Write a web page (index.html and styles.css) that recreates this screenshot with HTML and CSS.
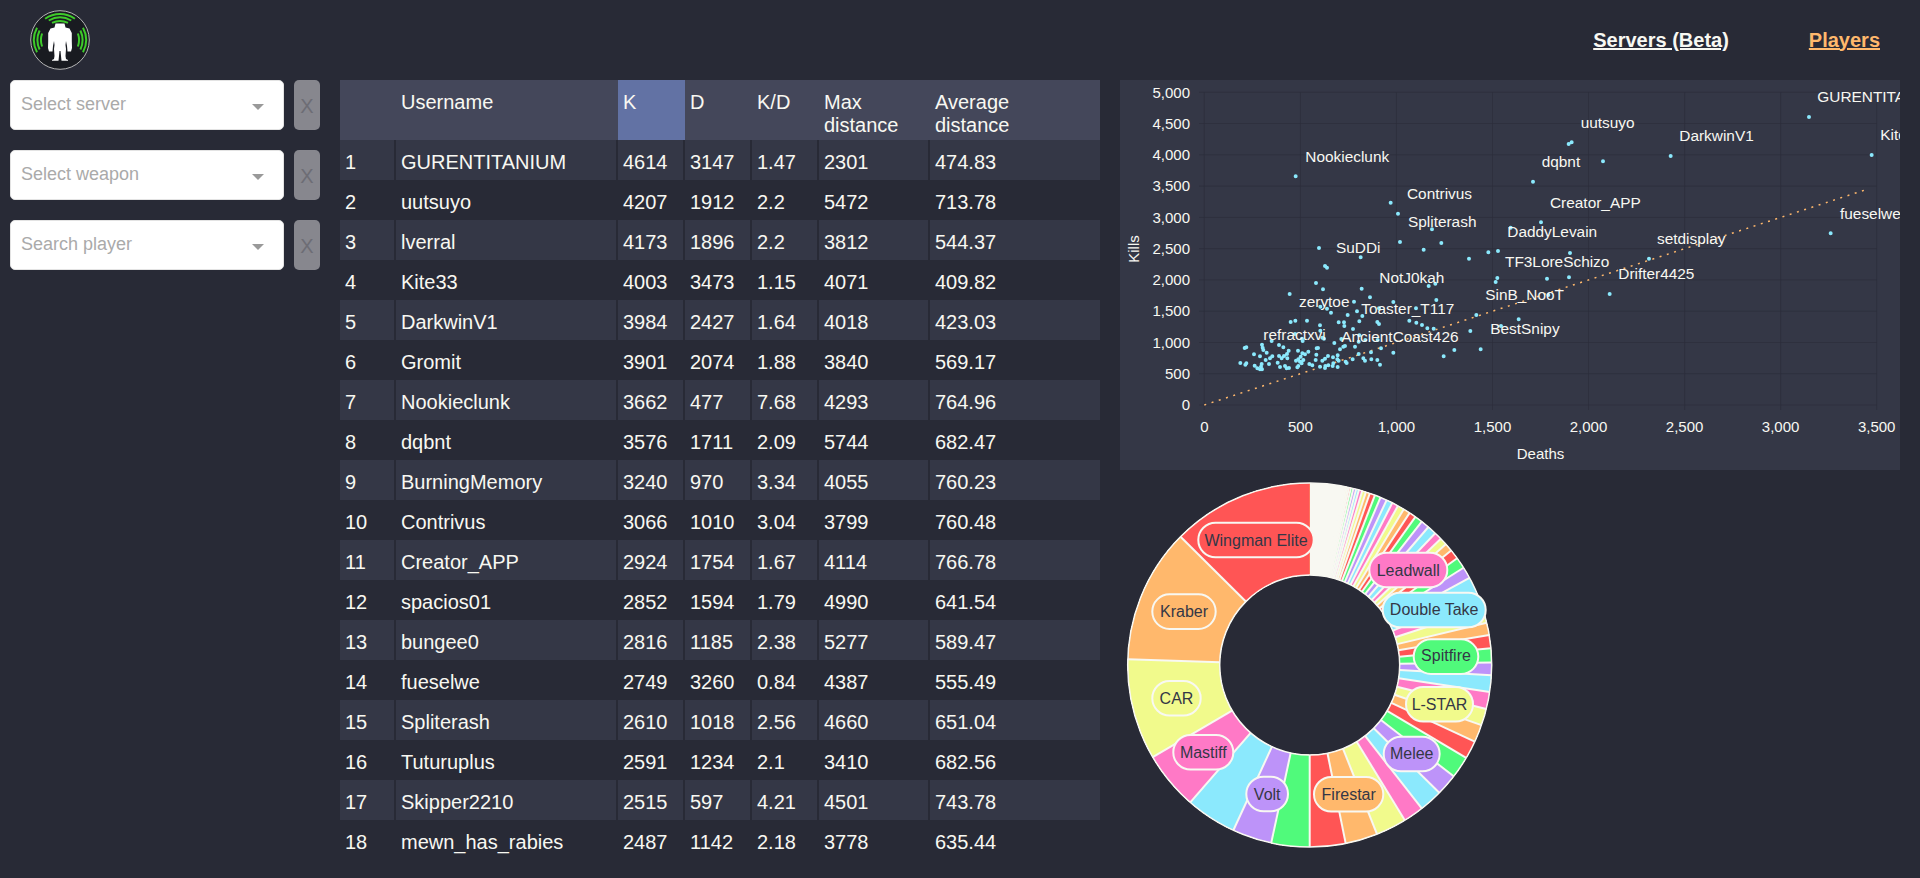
FILE: index.html
```html
<!DOCTYPE html>
<html lang="en">
<head>
<meta charset="utf-8">
<title>Players</title>
<link rel="stylesheet" href="styles.css">
</head>
<body>
<header class="topbar">
  <svg class="logo" viewBox="0 0 60 60" width="60" height="60">
    <circle cx="30" cy="30" r="29.3" class="logo-disc"/>
    <path class="logo-arc" d="M15.1 8.700A26 26 0 0 1 44.900 8.700M18.750 10.500A22.500 22.500 0 0 1 41.250 10.500M22 12.800A19 19 0 0 1 38 12.800M53 17.800A26 26 0 0 1 53 42.200M50.400 20.500A22.500 22.500 0 0 1 50.400 39.500M47.900 23.500A19 19 0 0 1 47.900 36.500M7 17.800A26 26 0 0 0 7 42.200M9.600 20.500A22.500 22.500 0 0 0 9.600 39.500M12.100 23.500A19 19 0 0 0 12.100 36.500"/>
    <path class="logo-titan" d="M25.500 13.500H34.500L35.500 17.500L39.500 18.500L41.800 23L41.800 31L42 38L41 41.500L37.500 41.500L37 36L36 31L35.500 35L36 39L35.500 46L36 49L38 50V50.700H31.500L31 46L30.500 41H29.500L29 46L28.500 50.700H22V50L24 49L24.500 46L24 39L24.500 35L24 31L23 36L22.500 41.500L19 41.500L18 38L18.200 31L18.200 23L20.500 18.500L24.500 17.500Z"/>
  </svg>
  <nav class="nav">
    <a class="nav-link" href="#">Servers (Beta)</a>
    <a class="nav-link nav-active" href="#">Players</a>
  </nav>
</header>
<main class="layout">
  <aside class="filters">
    <div class="filter"><div class="select"><span class="placeholder">Select server</span><i class="caret"></i></div><button class="clear" disabled>X</button></div>
    <div class="filter"><div class="select"><span class="placeholder">Select weapon</span><i class="caret"></i></div><button class="clear" disabled>X</button></div>
    <div class="filter"><div class="select"><span class="placeholder">Search player</span><i class="caret"></i></div><button class="clear" disabled>X</button></div>
  </aside>
  <table class="board">
    <colgroup><col class="c-rank"><col class="c-name"><col class="c-num"><col class="c-num"><col class="c-num"><col class="c-max"><col class="c-avg"></colgroup>
    <thead><tr><th></th><th>Username</th><th class="sorted">K</th><th>D</th><th>K/D</th><th>Max distance</th><th class="th-avg">Average distance</th></tr></thead>
    <tbody>
      <tr><td>1</td><td>GURENTITANIUM</td><td>4614</td><td>3147</td><td>1.47</td><td>2301</td><td>474.83</td></tr>
      <tr><td>2</td><td>uutsuyo</td><td>4207</td><td>1912</td><td>2.2</td><td>5472</td><td>713.78</td></tr>
      <tr><td>3</td><td>lverral</td><td>4173</td><td>1896</td><td>2.2</td><td>3812</td><td>544.37</td></tr>
      <tr><td>4</td><td>Kite33</td><td>4003</td><td>3473</td><td>1.15</td><td>4071</td><td>409.82</td></tr>
      <tr><td>5</td><td>DarkwinV1</td><td>3984</td><td>2427</td><td>1.64</td><td>4018</td><td>423.03</td></tr>
      <tr><td>6</td><td>Gromit</td><td>3901</td><td>2074</td><td>1.88</td><td>3840</td><td>569.17</td></tr>
      <tr><td>7</td><td>Nookieclunk</td><td>3662</td><td>477</td><td>7.68</td><td>4293</td><td>764.96</td></tr>
      <tr><td>8</td><td>dqbnt</td><td>3576</td><td>1711</td><td>2.09</td><td>5744</td><td>682.47</td></tr>
      <tr><td>9</td><td>BurningMemory</td><td>3240</td><td>970</td><td>3.34</td><td>4055</td><td>760.23</td></tr>
      <tr><td>10</td><td>Contrivus</td><td>3066</td><td>1010</td><td>3.04</td><td>3799</td><td>760.48</td></tr>
      <tr><td>11</td><td>Creator_APP</td><td>2924</td><td>1754</td><td>1.67</td><td>4114</td><td>766.78</td></tr>
      <tr><td>12</td><td>spacios01</td><td>2852</td><td>1594</td><td>1.79</td><td>4990</td><td>641.54</td></tr>
      <tr><td>13</td><td>bungee0</td><td>2816</td><td>1185</td><td>2.38</td><td>5277</td><td>589.47</td></tr>
      <tr><td>14</td><td>fueselwe</td><td>2749</td><td>3260</td><td>0.84</td><td>4387</td><td>555.49</td></tr>
      <tr><td>15</td><td>Spliterash</td><td>2610</td><td>1018</td><td>2.56</td><td>4660</td><td>651.04</td></tr>
      <tr><td>16</td><td>Tuturuplus</td><td>2591</td><td>1234</td><td>2.1</td><td>3410</td><td>682.56</td></tr>
      <tr><td>17</td><td>Skipper2210</td><td>2515</td><td>597</td><td>4.21</td><td>4501</td><td>743.78</td></tr>
      <tr><td>18</td><td>mewn_has_rabies</td><td>2487</td><td>1142</td><td>2.18</td><td>3778</td><td>635.44</td></tr>
    </tbody>
  </table>
  <section class="charts">
    <svg class="scatter" viewBox="0 0 780 390" width="780" height="390">
      <path class="grid" d="M79 325H756.700M79 293.700H756.700M79 262.500H756.700M79 231.200H756.700M79 199.900H756.700M79 168.600H756.700M79 137.400H756.700M79 106.100H756.700M79 74.800H756.700M79 43.500H756.700M79 12.300H756.700M84.300 12.300V330M180.400 12.300V330M276.400 12.300V330M372.500 12.300V330M468.500 12.300V330M564.600 12.300V330M660.600 12.300V330M756.700 12.300V330"/>
      <g class="tick tick-y">
        <text x="70" y="330">0</text><text x="70" y="299">500</text><text x="70" y="267.500">1,000</text><text x="70" y="236">1,500</text><text x="70" y="205">2,000</text><text x="70" y="174">2,500</text><text x="70" y="142.500">3,000</text><text x="70" y="111">3,500</text><text x="70" y="80">4,000</text><text x="70" y="49">4,500</text><text x="70" y="17.500">5,000</text>
      </g>
      <g class="tick tick-x">
        <text x="84.300" y="352">0</text><text x="180.400" y="352">500</text><text x="276.400" y="352">1,000</text><text x="372.500" y="352">1,500</text><text x="468.500" y="352">2,000</text><text x="564.600" y="352">2,500</text><text x="660.600" y="352">3,000</text><text x="756.700" y="352">3,500</text>
      </g>
      <text class="tick axis-title" x="420.500" y="379">Deaths</text>
      <text class="tick axis-title" transform="translate(19 169) rotate(-90)">Kills</text>
      <line class="trend" x1="84.300" y1="325" x2="748" y2="109"/>
      <path class="dots" transform="translate(-10 -10) scale(.33333)" d="M557 319h0M842 398h0M864 431h0M870 516h0M627 534h0M752 562h0"/>
      <path class="dots" transform="translate(60 180) scale(.33333)" d="M329 102h0M408 69h0M429 88h0M435 18h0M441 23h0M545 86h0M570 112h0M522 125h0M640 126h0M421 140h0M441 146h0M453 158h0M531 154h0M503 165h0M547 168h0M538 184h0M476 187h0M492 187h0M493 198h0M332 186h0M346 182h0M381 182h0M420 196h0M592 186h0M597 192h0M519 207h0M597 145h0M708 145h0M688 182h0M709 188h0M345 222h0M368 243h0M366 236h0M421 212h0M427 233h0M432 236h0M463 249h0M538 226h0M484 237h0M490 260h0M480 268h0M495 258h0M525 260h0M536 245h0M556 240h0M593 240h0M603 265h0M640 278h0M199 262h0M194 264h0M246 254h0M248 263h0M250 270h0M260 278h0M222 283h0M240 289h0M257 300h0M270 295h0M277 289h0M297 255h0M310 262h0M326 272h0M297 288h0M312 288h0M321 282h0M322 295h0M305 295h0M275 243h0M354 272h0M385 275h0M367 280h0M362 290h0M375 283h0M355 298h0M348 302h0M360 305h0M370 300h0M365 310h0M355 318h0M352 322h0M320 325h0M327 324h0M315 318h0M300 321h0M293 308h0M267 312h0M245 312h0M243 320h0M240 328h0M232 325h0M224 317h0M246 328h0M196 314h0M199 310h0M181 309h0M388 312h0M397 316h0M407 300h0M409 284h0M410 265h0M414 264h0M427 302h0M435 296h0M444 288h0M459 292h0M473 286h0M472 298h0M476 302h0M460 310h0M458 318h0M473 321h0M445 316h0M435 324h0M420 320h0M436 318h0M497 305h0M500 309h0M518 298h0M536 282h0M550 295h0M555 302h0M573 277h0M574 298h0M592 300h0M600 314h0"/>
      <path class="dots" transform="translate(300 100) scale(.33333)" d="M339 5h0M36 148h0M64 189h0M11 209h0M147 236h0M205 217h0M234 213h0M272 143h0M363 127h0M450 219h0M232 294h0M227 306h0M381 296h0M447 292h0M569 342h0M687 236h0M26 318h0M46 311h0M49 360h0M169 405h0M296 418h0M243 438h0M6 435h0M22 445h0M41 446h0M151 453h0M103 510h0M182 508h0M71 529h0M385 345h0"/>
      <path class="dots" transform="translate(390 -10) scale(.33333)" d="M897 141h0M1085 255h0M482 258h0M279 274h0M176 222h0M185 217h0M962 490h0"/>
      <g class="tick point-label">
        <text x="185.300" y="82">Nookieclunk</text>
        <text x="287" y="119">Contrivus</text>
        <text x="288" y="147">Spliterash</text>
        <text x="216" y="173">SuDDi</text>
        <text x="259.300" y="203">NotJ0kah</text>
        <text x="179" y="227">zerytoe</text>
        <text x="241.300" y="234">Toaster_T117</text>
        <text x="143.300" y="260">refractxvi</text>
        <text x="221.300" y="262">AncientCoast426</text>
        <text x="387.300" y="157">DaddyLevain</text>
        <text x="385" y="187">TF3LoreSchizo</text>
        <text x="365.300" y="220">SinB_NooT</text>
        <text x="370.300" y="254">BestSnipy</text>
        <text x="460.700" y="48">uutsuyo</text>
        <text x="421.700" y="87">dqbnt</text>
        <text x="559.300" y="61">DarkwinV1</text>
        <text x="697.300" y="22">GURENTITANIUM</text>
        <text x="760.300" y="60">Kite33</text>
        <text x="430" y="128">Creator_APP</text>
        <text x="537" y="164">setdisplay</text>
        <text x="498.300" y="199">Drifter4425</text>
        <text x="720" y="139">fueselwe</text>
      </g>
    </svg>
    <svg class="donut" viewBox="1120 478 380 380" width="380" height="380">
      <g transform="translate(1309.7 665) scale(-1 1) rotate(-90)">
        <g class="ring">
          <circle class="s-white" r="136" pathLength="360" stroke-dasharray="360 720"/>
          <circle class="s-purple" r="136" pathLength="360" stroke-dasharray="349.300 720"/>
          <circle class="s-cyan" r="136" pathLength="360" stroke-dasharray="349.100 720"/>
          <circle class="s-pink" r="136" pathLength="360" stroke-dasharray="348.900 720"/>
          <circle class="s-yellow" r="136" pathLength="360" stroke-dasharray="348.500 720"/>
          <circle class="s-orange" r="136" pathLength="360" stroke-dasharray="348 720"/>
          <circle class="s-red" r="136" pathLength="360" stroke-dasharray="347.500 720"/>
          <circle class="s-green" r="136" pathLength="360" stroke-dasharray="346.900 720"/>
          <circle class="s-purple" r="136" pathLength="360" stroke-dasharray="346.100 720"/>
          <circle class="s-cyan" r="136" pathLength="360" stroke-dasharray="345.200 720"/>
          <circle class="s-pink" r="136" pathLength="360" stroke-dasharray="344.300 720"/>
          <circle class="s-yellow" r="136" pathLength="360" stroke-dasharray="343.200 720"/>
          <circle class="s-orange" r="136" pathLength="360" stroke-dasharray="342 720"/>
          <circle class="s-red" r="136" pathLength="360" stroke-dasharray="340.700 720"/>
          <circle class="s-green" r="136" pathLength="360" stroke-dasharray="339 720"/>
          <circle class="s-purple" r="136" pathLength="360" stroke-dasharray="337.100 720"/>
          <circle class="s-cyan" r="136" pathLength="360" stroke-dasharray="335 720"/>
          <circle class="s-pink" r="136" pathLength="360" stroke-dasharray="333 720"/>
          <circle class="s-yellow" r="136" pathLength="360" stroke-dasharray="331 720"/>
          <circle class="s-orange" r="136" pathLength="360" stroke-dasharray="328.900 720"/>
          <circle class="s-red" r="136" pathLength="360" stroke-dasharray="326.700 720"/>
          <circle class="s-green" r="136" pathLength="360" stroke-dasharray="324.500 720"/>
          <circle class="s-purple" r="136" pathLength="360" stroke-dasharray="322 720"/>
          <circle class="s-cyan" r="136" pathLength="360" stroke-dasharray="319.300 720"/>
          <circle class="s-pink" r="136" pathLength="360" stroke-dasharray="316.400 720"/>
          <circle class="s-yellow" r="136" pathLength="360" stroke-dasharray="313.900 720"/>
          <circle class="s-orange" r="136" pathLength="360" stroke-dasharray="311.600 720"/>
          <circle class="s-red" r="136" pathLength="360" stroke-dasharray="309 720"/>
          <circle class="s-green" r="136" pathLength="360" stroke-dasharray="305.900 720"/>
          <circle class="s-purple" r="136" pathLength="360" stroke-dasharray="302.300 720"/>
          <circle class="s-cyan" r="136" pathLength="360" stroke-dasharray="298.600 720"/>
          <circle class="s-pink" r="136" pathLength="360" stroke-dasharray="292.500 720"/>
          <circle class="s-yellow" r="136" pathLength="360" stroke-dasharray="288 720"/>
          <circle class="s-orange" r="136" pathLength="360" stroke-dasharray="283.400 720"/>
          <circle class="s-red" r="136" pathLength="360" stroke-dasharray="279.500 720"/>
          <circle class="s-green" r="136" pathLength="360" stroke-dasharray="275.300 720"/>
          <circle class="s-purple" r="136" pathLength="360" stroke-dasharray="270.800 720"/>
          <circle class="s-cyan" r="136" pathLength="360" stroke-dasharray="266.800 720"/>
          <circle class="s-pink" r="136" pathLength="360" stroke-dasharray="261.500 720"/>
          <circle class="s-yellow" r="136" pathLength="360" stroke-dasharray="256 720"/>
          <circle class="s-orange" r="136" pathLength="360" stroke-dasharray="250.700 720"/>
          <circle class="s-red" r="136" pathLength="360" stroke-dasharray="245.100 720"/>
          <circle class="s-green" r="136" pathLength="360" stroke-dasharray="239.300 720"/>
          <circle class="s-purple" r="136" pathLength="360" stroke-dasharray="232.300 720"/>
          <circle class="s-cyan" r="136" pathLength="360" stroke-dasharray="225.400 720"/>
          <circle class="s-pink" r="136" pathLength="360" stroke-dasharray="218 720"/>
          <circle class="s-yellow" r="136" pathLength="360" stroke-dasharray="211.500 720"/>
          <circle class="s-orange" r="136" pathLength="360" stroke-dasharray="201.700 720"/>
          <circle class="s-red" r="136" pathLength="360" stroke-dasharray="191.400 720"/>
          <circle class="s-green" r="136" pathLength="360" stroke-dasharray="180 720"/>
          <circle class="s-purple" r="136" pathLength="360" stroke-dasharray="167.800 720"/>
          <circle class="s-cyan" r="136" pathLength="360" stroke-dasharray="155.200 720"/>
          <circle class="s-pink" r="136" pathLength="360" stroke-dasharray="139 720"/>
          <circle class="s-yellow" r="136" pathLength="360" stroke-dasharray="120.400 720"/>
          <circle class="s-orange" r="136" pathLength="360" stroke-dasharray="88.200 720"/>
          <circle class="s-red" r="136" pathLength="360" stroke-dasharray="45.200 720"/>
        </g>
        <g class="seams">
          <line x1="90" x2="182" transform="rotate(45.2)"/><line x1="90" x2="182" transform="rotate(88.2)"/><line x1="90" x2="182" transform="rotate(120.4)"/><line x1="90" x2="182" transform="rotate(139)"/><line x1="90" x2="182" transform="rotate(155.2)"/><line x1="90" x2="182" transform="rotate(167.8)"/><line x1="90" x2="182" transform="rotate(180)"/><line x1="90" x2="182" transform="rotate(191.4)"/><line x1="90" x2="182" transform="rotate(201.7)"/><line x1="90" x2="182" transform="rotate(211.5)"/><line x1="90" x2="182" transform="rotate(218)"/><line x1="90" x2="182" transform="rotate(225.4)"/><line x1="90" x2="182" transform="rotate(232.3)"/><line x1="90" x2="182" transform="rotate(239.3)"/><line x1="90" x2="182" transform="rotate(245.1)"/><line x1="90" x2="182" transform="rotate(250.7)"/><line x1="90" x2="182" transform="rotate(256)"/><line x1="90" x2="182" transform="rotate(261.5)"/><line x1="90" x2="182" transform="rotate(266.8)"/><line x1="90" x2="182" transform="rotate(270.8)"/><line x1="90" x2="182" transform="rotate(275.3)"/><line x1="90" x2="182" transform="rotate(279.5)"/><line x1="90" x2="182" transform="rotate(283.4)"/><line x1="90" x2="182" transform="rotate(288)"/><line x1="90" x2="182" transform="rotate(292.5)"/><line x1="90" x2="182" transform="rotate(298.6)"/><line x1="90" x2="182" transform="rotate(302.3)"/><line x1="90" x2="182" transform="rotate(305.9)"/><line x1="90" x2="182" transform="rotate(309)"/><line x1="90" x2="182" transform="rotate(311.6)"/><line x1="90" x2="182" transform="rotate(313.9)"/><line x1="90" x2="182" transform="rotate(316.4)"/><line x1="90" x2="182" transform="rotate(319.3)"/><line x1="90" x2="182" transform="rotate(322)"/><line x1="90" x2="182" transform="rotate(324.5)"/><line x1="90" x2="182" transform="rotate(326.7)"/><line x1="90" x2="182" transform="rotate(328.9)"/><line x1="90" x2="182" transform="rotate(331)"/><line x1="90" x2="182" transform="rotate(333)"/><line x1="90" x2="182" transform="rotate(335)"/><line x1="90" x2="182" transform="rotate(337.1)"/><line x1="90" x2="182" transform="rotate(339)"/><line x1="90" x2="182" transform="rotate(340.7)"/><line x1="90" x2="182" transform="rotate(342)"/><line x1="90" x2="182" transform="rotate(343.2)"/><line x1="90" x2="182" transform="rotate(344.3)"/><line x1="90" x2="182" transform="rotate(345.2)"/><line x1="90" x2="182" transform="rotate(346.1)"/><line x1="90" x2="182" transform="rotate(346.9)"/><line x1="90" x2="182" transform="rotate(347.5)"/><line x1="90" x2="182" transform="rotate(348)"/><line x1="90" x2="182" transform="rotate(348.5)"/><line x1="90" x2="182" transform="rotate(348.9)"/><line x1="90" x2="182" transform="rotate(349.3)"/>
        </g>
        <circle class="edge" r="182"/>
        <circle class="edge" r="90"/>
      </g>
      <g class="pill">
        <rect class="f-red" x="1198.300" y="522.700" width="115.400" height="34.600" rx="17.300"/><text x="1256" y="545.500">Wingman Elite</text>
        <rect class="f-orange" x="1152.300" y="594.300" width="63.400" height="34.600" rx="17.300"/><text x="1184" y="617">Kraber</text>
        <rect class="f-yellow" x="1152.300" y="681" width="48.400" height="34.600" rx="17.300"/><text x="1176.500" y="703.500">CAR</text>
        <rect class="f-pink" x="1173.300" y="735" width="60" height="34.600" rx="17.300"/><text x="1203.300" y="757.500">Mastiff</text>
        <rect class="f-purple" x="1246.300" y="776.700" width="41.700" height="34.600" rx="17.300"/><text x="1267.200" y="799.500">Volt</text>
        <rect class="f-orange" x="1314" y="777" width="69.300" height="34.600" rx="17.300"/><text x="1348.700" y="799.500">Firestar</text>
        <rect class="f-purple" x="1383.700" y="736.700" width="56" height="34.600" rx="17.300"/><text x="1411.700" y="759">Melee</text>
        <rect class="f-yellow" x="1406" y="687" width="67" height="34.600" rx="17.300"/><text x="1439.500" y="709.500">L-STAR</text>
        <rect class="f-green" x="1413.700" y="639.300" width="64.600" height="34.600" rx="17.300"/><text x="1446" y="660.500">Spitfire</text>
        <rect class="f-cyan" x="1382.700" y="592.700" width="103" height="34.600" rx="17.300"/><text x="1434.200" y="615">Double Take</text>
        <rect class="f-pink" x="1369.300" y="552.700" width="78" height="34.600" rx="17.300"/><text x="1408.300" y="575.500">Leadwall</text>
      </g>
    </svg>
  </section>
</main>
</body>
</html>
```
FILE: styles.css
```css
* { box-sizing: border-box; }
html, body { margin: 0; padding: 0; }
body {
  height: 878px;
  overflow: hidden;
  background: #282a36;
  color: #f8f8f2;
  font-family: "Liberation Sans", Arial, sans-serif;
}
.topbar { display: flex; align-items: center; justify-content: space-between; height: 80px; padding: 0 40px 0 30px; }
.logo { display: block; }
.logo-disc { fill: #191b21; stroke: #b5b5b5; stroke-width: 1; }
.logo-arc { fill: none; stroke: #3ecb2a; stroke-width: 2; }
.logo-titan { fill: #fff; }
.nav { display: flex; gap: 80px; font-size: 20px; font-weight: 700; }
.nav-link { color: #f8f8f2; }
.nav-active { color: #ffb86c; }

.layout { display: flex; align-items: flex-start; padding-left: 10px; }
.filters { display: flex; flex-direction: column; gap: 20px; width: 310px; margin-right: 20px; }
.filter { display: flex; gap: 10px; height: 50px; }
.select { position: relative; flex: 0 0 274px; padding: 0 0 2px 10px; display: flex; align-items: center; background: #fff; border: 1px solid #e3e3e3; border-radius: 5px; }
.placeholder { font-size: 18px; color: #aaa; }
.caret { position: absolute; right: 19px; top: 23px; border-style: solid; border-width: 6px 6px 0; border-color: #999 transparent transparent; }
.clear { flex: 0 0 26px; padding: 2px 0 0; border: 0; border-radius: 5px; background: #87878e; color: #6d6d75; font: 20px "Liberation Sans", Arial, sans-serif; }

.board { width: 760px; table-layout: fixed; border-collapse: separate; border-spacing: 0; font-size: 20px; }
.c-rank { width: 56px; }
.c-name { width: 222px; }
.c-num { width: 67px; }
.c-max { width: 111px; }
.c-avg { width: 170px; }
.board th { height: 60px; padding: 11px 5px 0; background: #44475a; font-weight: 400; line-height: 23px; text-align: left; vertical-align: top; }
.board th.sorted { background: #6272a4; }
.board th.th-avg { padding-right: 60px; }
.board td { height: 40px; padding: 5px 5px 0; border-right: 2px solid #282a36; white-space: nowrap; }
.board td:last-child { border-right: 0; }
.board tbody tr:nth-child(odd) td { background: #343746; }

.charts { width: 780px; margin-left: 20px; }
.scatter, .donut { display: block; }
.scatter { background: #343746; margin-bottom: 8px; overflow: hidden; }
.grid { fill: none; stroke: #2b2d3a; stroke-width: 1; opacity: .65; }
.tick { fill: #f8f8f2; font-size: 15px; font-family: "Liberation Sans", Arial, sans-serif; }
.tick-y { text-anchor: end; }
.tick-x { text-anchor: middle; }
.axis-title { text-anchor: middle; }
.point-label { font-size: 15.400px; }
.trend { stroke: #ffb86c; stroke-width: 1.500; stroke-dasharray: 2 5.600; }
.dots { fill: none; stroke: #8be9fd; stroke-width: 12; stroke-linecap: round; }

.ring circle { fill: none; stroke-width: 92; }
.seams line { stroke: #f8f8f2; stroke-width: 2; }
.edge { fill: none; stroke: #f8f8f2; stroke-width: 1.500; }
.s-white { stroke: #f8f8f2; }
.s-red { stroke: #ff5555; }
.s-orange { stroke: #ffb86c; }
.s-yellow { stroke: #f1fa8c; }
.s-pink { stroke: #ff79c6; }
.s-cyan { stroke: #8be9fd; }
.s-purple { stroke: #bd93f9; }
.s-green { stroke: #50fa7b; }

.pill rect { stroke: #f8f8f2; stroke-width: 2; }
.pill text { fill: #343746; font-size: 16px; font-family: "Liberation Sans", Arial, sans-serif; text-anchor: middle; }
.f-red { fill: #ff5555; }
.f-orange { fill: #ffb86c; }
.f-yellow { fill: #f1fa8c; }
.f-pink { fill: #ff79c6; }
.f-cyan { fill: #8be9fd; }
.f-purple { fill: #bd93f9; }
.f-green { fill: #50fa7b; }
```
